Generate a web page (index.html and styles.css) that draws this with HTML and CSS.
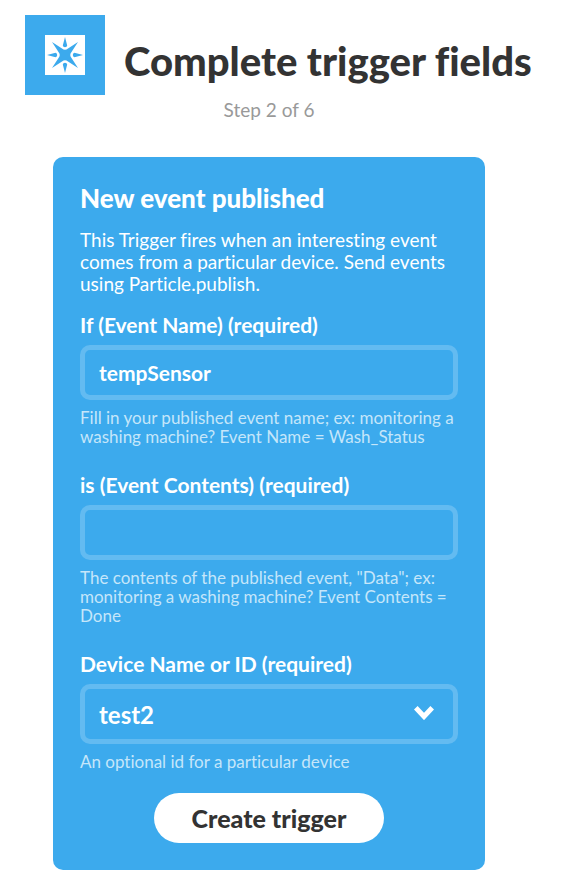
FILE: index.html
```html
<!DOCTYPE html>
<html lang="en">
<head>
<meta charset="utf-8">
<meta name="viewport" content="width=device-width, initial-scale=1">
<title>Complete trigger fields</title>
<link rel="stylesheet" href="styles.css">
</head>
<body>
<header class="header">
  <div class="logo">
    <svg class="logo-mark" viewBox="0 0 40 40" aria-hidden="true">
      <path fill="#fff" d="M0 0h40v40H0z"/>
      <g fill="#3caaed">
        <path d="M7 7 17 13.500Q20 16 23 13.500L33 7 26.500 17Q24 20 26.500 23L33 33 23 26.500Q20 24 17 26.500L7 33 13.500 23Q16 20 13.500 17Z"/>
        <path d="M20 2 22.200 10.500Q22 12.200 20 12.200T17.800 10.500ZM20 38 22.200 29.500Q22 27.800 20 27.800T17.800 29.500ZM2 20 10.500 17.800Q12.200 18 12.200 20T10.500 22.200ZM38 20 29.500 17.800Q27.800 18 27.800 20T29.500 22.200Z"/>
      </g>
    </svg>
  </div>
  <h1 class="title">Complete trigger fields</h1>
</header>
<main class="content">
  <p class="step">Step 2 of 6</p>
  <form class="card">
    <h2 class="card-title">New event published</h2>
    <p class="description">This Trigger fires when an interesting event comes from a particular device. Send events using Particle.publish.</p>
    <div class="field">
      <label class="label" for="event-name">If (Event Name) (required)</label>
      <input class="control" id="event-name" type="text" value="tempSensor" aria-describedby="event-name-help">
      <p class="help" id="event-name-help">Fill in your published event name; ex: monitoring a washing machine? Event Name = Wash_Status</p>
    </div>
    <div class="field">
      <label class="label" for="event-contents">is (Event Contents) (required)</label>
      <input class="control" id="event-contents" type="text" aria-describedby="event-contents-help">
      <p class="help" id="event-contents-help">The contents of the published event, "Data"; ex: monitoring a washing machine? Event Contents = Done</p>
    </div>
    <div class="field">
      <label class="label" for="device">Device Name or ID (required)</label>
      <div class="select-wrap">
        <select class="control select" id="device" aria-describedby="device-help">
          <option>test2</option>
        </select>
        <svg class="chevron" viewBox="0 0 20 14" aria-hidden="true"><path d="M1.800 1.800 10 10.500l8.200-8.700" fill="none" stroke="#fff" stroke-width="5"/></svg>
      </div>
      <p class="help" id="device-help">An optional id for a particular device</p>
    </div>
    <button class="submit" type="submit">Create trigger</button>
  </form>
</main>
</body>
</html>
```

FILE: styles.css
```css
* {
  box-sizing: border-box;
}

body {
  margin: 0;
  background: #fff;
  color: #333;
  font-family: Lato, "Open Sans", sans-serif;
  font-variant-ligatures: none;
}

h1,
h2,
p {
  margin: 0;
}

.header {
  display: flex;
  align-items: center;
  gap: 19px;
  padding: 15px 24px 0 25px;
}

.logo {
  display: flex;
  flex: none;
  padding: 20px;
  background: #3caaed;
}

.logo-mark {
  width: 40px;
  height: 40px;
}

.title {
  padding-top: 12px;
  font-size: 40px;
  font-weight: 900;
  line-height: 48px;
  white-space: nowrap;
}

.content {
  padding: 3px 87px 12px 53px;
}

.step {
  color: #999;
  font-size: 19px;
  line-height: 24px;
  text-align: center;
}

.card {
  display: flex;
  flex-direction: column;
  margin-top: 35px;
  padding: 25px 27px 27px;
  border-radius: 10px;
  background: #3caaed;
  color: #fff;
}

.card-title {
  font-size: 26px;
  font-weight: 900;
  line-height: 32px;
}

.description {
  margin: 15px 0 18px;
  font-size: 19px;
  line-height: 22px;
}

.field {
  display: flex;
  flex-direction: column;
  gap: 8px;
}

.field + .field {
  margin-top: 27px;
}

.label {
  font-size: 21px;
  font-weight: 700;
  line-height: 24px;
}

.control {
  width: 100%;
  height: 55px;
  padding: 0 14px;
  border: 5px solid #63bbf1;
  border-radius: 10px;
  outline: 0;
  background: transparent;
  color: #fff;
  font-family: inherit;
  font-size: 21px;
  font-weight: 700;
  font-variant-ligatures: inherit;
}

.control:focus-visible {
  border-color: #9dd4f6;
}

.select-wrap {
  position: relative;
  display: flex;
}

.select {
  height: 60px;
  appearance: none;
  font-size: 24px;
}

.select option {
  color: #333;
}

.chevron {
  position: absolute;
  top: 22px;
  right: 24px;
  width: 20px;
  height: 14px;
  pointer-events: none;
}

.help {
  color: #c5e6fa;
  font-size: 17px;
  line-height: 19px;
}

.submit {
  align-self: center;
  margin-top: 22px;
  padding: 9px 38px;
  border: 0;
  border-radius: 25px;
  background: #fff;
  color: #333;
  font-family: inherit;
  font-size: 25px;
  font-weight: 900;
  line-height: 32px;
}
```
